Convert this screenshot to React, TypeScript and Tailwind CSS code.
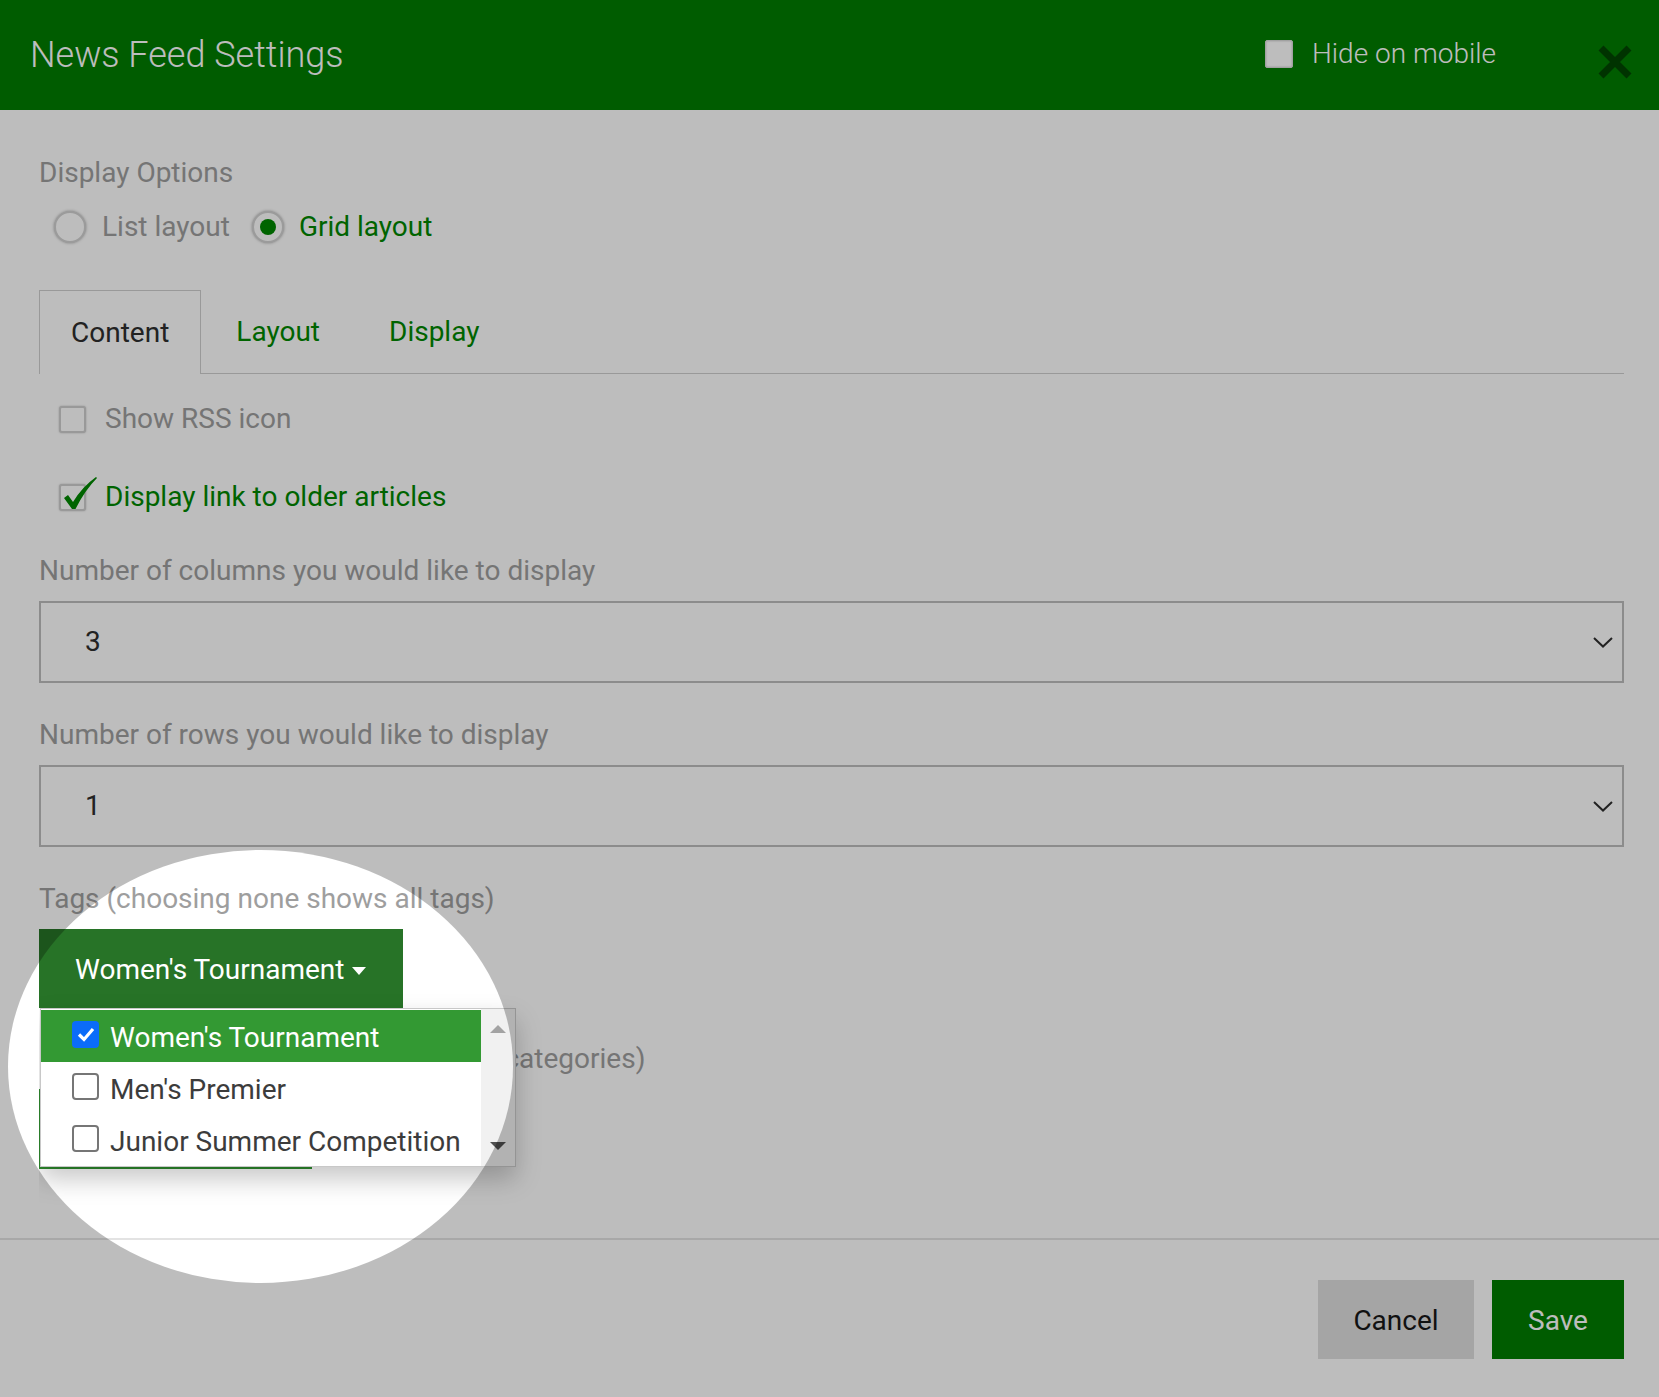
import { useState } from 'react'

const tags = ["Women's Tournament", "Men's Premier", 'Junior Summer Competition']

function Radio({ checked }: { checked?: boolean }) {
  return (
    <span className="flex h-[32px] w-[32px] items-center justify-center rounded-full border-2 border-[#d2d2d2] bg-white shadow-[0_0_3px_rgba(0,0,0,0.35)]">
      {checked && <span className="h-[16px] w-[16px] rounded-full bg-[#008700]" />}
    </span>
  )
}

function Chevron() {
  return (
    <svg width="20" height="11" viewBox="0 0 20 11" fill="none" stroke="#2e2e2e" strokeWidth="2">
      <path d="M1 1 L10 9.5 L19 1" />
    </svg>
  )
}

function SelectBox({ value }: { value: string }) {
  return (
    <div className="mt-[12px] flex h-[82px] items-center border-2 border-[#bdbdbd] pl-[44px] pr-[9px] text-[28px] text-[#2e2e2e]">
      <span>{value}</span>
      <span className="ml-auto">
        <Chevron />
      </span>
    </div>
  )
}

function App() {
  const [layout] = useState<'list' | 'grid'>('grid')

  return (
    <div className="relative h-[1397px] w-full overflow-hidden bg-white font-['Roboto',sans-serif]">
      <header className="flex h-[110px] items-center bg-[#007c00] pl-[30px] pr-[27px]">
        <h1 className="text-[36px] font-light leading-none text-white">News Feed Settings</h1>
        <div className="ml-auto mb-[3px] flex items-center">
          <span className="h-[28px] w-[28px] rounded-[2px] border border-[#dadada] bg-white shadow-[inset_0_0_2px_rgba(0,0,0,0.25)]" />
          <span className="ml-[19px] text-[28px] font-light leading-none text-white">Hide on mobile</span>
        </div>
        <svg className="ml-[102px] mt-[14px]" width="34" height="34" viewBox="0 0 34 34" stroke="#004600" strokeWidth="7">
          <path d="M3 3 L31 31 M31 3 L3 31" />
        </svg>
      </header>

      <div className="relative ml-[39px] mr-[35px] h-[1095px] overflow-hidden">
        <div className="pt-[45px] text-[28px] leading-[36px] text-[#9e9e9e]">Display Options</div>

        <div className="mt-[16px] flex h-[40px] items-center text-[28px]">
          <span className="ml-[15px]">
            <Radio checked={layout === 'list'} />
          </span>
          <span className="ml-[16px] text-[#9e9e9e]">List layout</span>
          <span className="ml-[22px]">
            <Radio checked={layout === 'grid'} />
          </span>
          <span className="ml-[15px] text-[#008700]">Grid layout</span>
        </div>

        <div className="mt-[43px] flex h-[84px] border-b border-[#cfcfcf] text-[28px]">
          <div className="-mb-px flex items-center border border-b-0 border-[#cfcfcf] bg-white px-[31px] text-[#2e2e2e]">
            Content
          </div>
          <div className="flex items-center px-[35px] text-[#008700]">Layout</div>
          <div className="flex items-center px-[34px] text-[#008700]">Display</div>
        </div>

        <div className="mt-[25px] flex h-[40px] items-center text-[28px]">
          <span className="ml-[20px] h-[27px] w-[27px] rounded-[3px] border-2 border-[#cfcfcf] bg-white shadow-[0_0_2px_rgba(0,0,0,0.25)]" />
          <span className="ml-[19px] text-[#9e9e9e]">Show RSS icon</span>
        </div>

        <div className="mt-[38px] flex h-[40px] items-center text-[28px]">
          <span className="relative ml-[20px] h-[27px] w-[27px] rounded-[3px] border-2 border-[#cfcfcf] bg-white shadow-[0_0_2px_rgba(0,0,0,0.25)]">
            <svg className="absolute left-[1px] top-[-10px]" width="36" height="36" viewBox="0 0 36 36">
              <path d="M2 22 L6 19 L11 26 Q20 11 34 1 L35 2 Q23 14 13.5 33 L10 33 Z" fill="#008700" />
            </svg>
          </span>
          <span className="ml-[19px] text-[#008700]">Display link to older articles</span>
        </div>

        <div className="mt-[36px] text-[28px] leading-[36px] text-[#9e9e9e]">Number of columns you would like to display</div>
        <SelectBox value="3" />

        <div className="mt-[34px] text-[28px] leading-[36px] text-[#9e9e9e]">Number of rows you would like to display</div>
        <SelectBox value="1" />

        <div className="mt-[34px] text-[28px] leading-[36px] text-[#9e9e9e]">Tags (choosing none shows all tags)</div>
        <button className="mt-[12px] flex h-[79px] w-[364px] items-center bg-[#277327] pl-[36px] pt-[2px] text-[28px] text-white">
          Women's Tournament
          <svg className="ml-[8px] mt-[3px]" width="14" height="8" viewBox="0 0 14 8">
            <path d="M0 0 L14 0 L7 8 Z" fill="white" />
          </svg>
        </button>

        <div className="mt-[33px] text-[28px] leading-[36px] text-[#9e9e9e]">Categories (choosing none shows all categories)</div>
        <div className="mt-[12px] h-[80px] w-[273px] border-2 border-[#2e8b2e] bg-white" />

        {/* open tag dropdown */}
        <div className="absolute left-[1px] top-[898px] flex h-[159px] w-[476px] border border-[#c8c8c8] bg-white shadow-[0_12px_24px_rgba(0,0,0,0.22)]">
          <ul className="flex-1 pt-[1px]">
            {tags.map((tag, i) => (
              <li
                key={tag}
                className={`flex h-[52px] items-center pl-[31px] pt-[3px] text-[28px] ${i === 0 ? 'bg-[#339933] text-white' : 'text-[#3c3c3c]'}`}
              >
                {i === 0 ? (
                  <span className="mb-[6px] flex h-[27px] w-[27px] items-center justify-center rounded-[4px] bg-[#0b6cf9]">
                    <svg width="18" height="15" viewBox="0 0 18 15" fill="none" stroke="white" strokeWidth="3.2">
                      <path d="M2 7.5 L7 12.5 L16 2" />
                    </svg>
                  </span>
                ) : (
                  <span className="mb-[6px] h-[27px] w-[27px] rounded-[4px] border-2 border-[#767676] bg-white" />
                )}
                <span className="ml-[11px]">{tag}</span>
              </li>
            ))}
          </ul>
          <div className="flex w-[34px] flex-col items-center justify-between bg-[#f1f1f1] py-[16px]">
            <svg width="16" height="8" viewBox="0 0 16 8">
              <path d="M0 8 L8 0 L16 8 Z" fill="#a3a3a3" />
            </svg>
            <svg width="16" height="8" viewBox="0 0 16 8">
              <path d="M0 0 L16 0 L8 8 Z" fill="#505050" />
            </svg>
          </div>
        </div>
      </div>

      <footer className="mt-[33px] flex justify-end gap-[18px] border-t-2 border-[#e3e3e3] pr-[35px] pt-[40px]">
        <button className="h-[79px] w-[156px] bg-[#dfdfdf] pt-[2px] text-[28px] text-[#171717]">Cancel</button>
        <button className="h-[79px] w-[132px] bg-[#007c00] pt-[2px] text-[28px] text-white">Save</button>
      </footer>

      {/* spotlight: dims everything outside the ellipse */}
      <div className="pointer-events-none absolute left-[8px] top-[850px] z-50 h-[433px] w-[505px] rounded-[50%] shadow-[0_0_0_3000px_rgba(0,0,0,0.26)]" />
    </div>
  )
}

export default App
